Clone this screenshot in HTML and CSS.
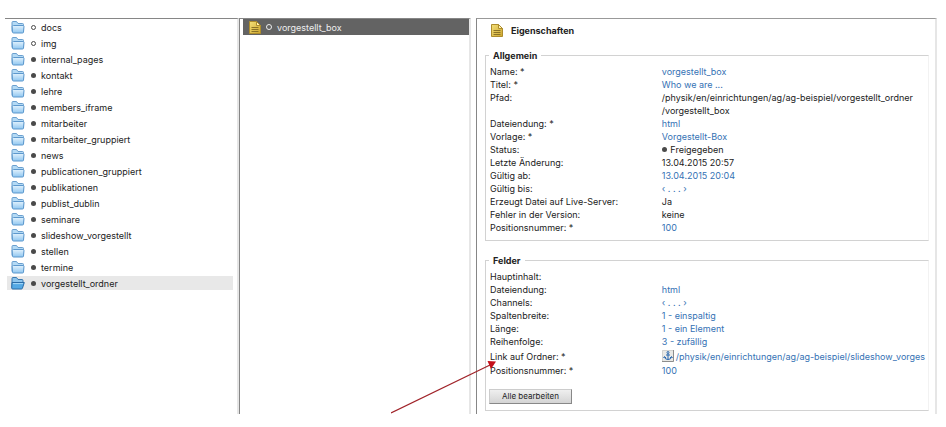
FILE: index.html
```html
<!DOCTYPE html>
<html lang="de">
<head>
    <meta charset="UTF-8">
    <meta name="viewport" content="width=device-width, initial-scale=1.0">
    <title>vorgestellt_box - Eigenschaften</title>
    <link rel="stylesheet" href="styles.css">
</head>
<body>
    <!-- shared icons -->
    <svg class="defs" width="0" height="0">
        <defs>
            <linearGradient id="blue" x1="0" y1="0" x2="0" y2="1">
                <stop offset="0" stop-color="#e2f2fd"/>
                <stop offset="1" stop-color="#8fc6f0"/>
            </linearGradient>
            <linearGradient id="gold" x1="0" y1="0" x2="1" y2="1">
                <stop offset="0" stop-color="#f3df79"/>
                <stop offset="1" stop-color="#cda62e"/>
            </linearGradient>
        </defs>
        <symbol id="folder" viewBox="0 0 14 13">
            <path d="M1 10.500V1.500q0-1 1-1h3.500l1.500 2h4.500q1 0 1 1v7.500" fill="#b4daf5" stroke="#6a9fce"/>
            <path d="M2.500 4.500h9.500q1 0 1 1l-.5 5.500q0 1-1 1H2.500q-1 0-1-1L1.200 5.500q0-1 1.300-1z" fill="url(#blue)" stroke="#5d98cd"/>
        </symbol>
        <symbol id="folder-open" viewBox="0 0 14 13">
            <path d="M1 10.500V1.500q0-1 1-1h3.500l1.500 2h4q1 0 1 1v3" fill="#8cc4ec" stroke="#3a79b0"/>
            <path d="M1 5.500h12.300l-1.800 5.500q-.3 1-1 1H1.700q-1 0-1-1z" fill="#55a9e4" stroke="#2c6ca6"/>
            <path d="M2 6.600h10" stroke="#a8d9f8"/>
        </symbol>
        <symbol id="page" viewBox="0 0 12 13">
            <path d="M.5.500h7l4 4v8h-11z" fill="url(#gold)" stroke="#ad8c2c"/>
            <path d="M7.500.500v4h4z" fill="#fff3b5" stroke="#ad8c2c"/>
            <path d="M2.500 6.500h7M2.500 8.500h7M2.500 10.500h7" stroke="#8a7226"/>
        </symbol>
    </svg>

    <div class="panels">
        <nav class="panel tree">
            <ul>
                <li><svg class="folder"><use href="#folder"/></svg><i class="dot open"></i>docs</li>
                <li><svg class="folder"><use href="#folder"/></svg><i class="dot open"></i>img</li>
                <li><svg class="folder"><use href="#folder"/></svg><i class="dot"></i>internal_pages</li>
                <li><svg class="folder"><use href="#folder"/></svg><i class="dot"></i>kontakt</li>
                <li><svg class="folder"><use href="#folder"/></svg><i class="dot"></i>lehre</li>
                <li><svg class="folder"><use href="#folder"/></svg><i class="dot"></i>members_iframe</li>
                <li><svg class="folder"><use href="#folder"/></svg><i class="dot"></i>mitarbeiter</li>
                <li><svg class="folder"><use href="#folder"/></svg><i class="dot"></i>mitarbeiter_gruppiert</li>
                <li><svg class="folder"><use href="#folder"/></svg><i class="dot"></i>news</li>
                <li><svg class="folder"><use href="#folder"/></svg><i class="dot"></i>publicationen_gruppiert</li>
                <li><svg class="folder"><use href="#folder"/></svg><i class="dot"></i>publikationen</li>
                <li><svg class="folder"><use href="#folder"/></svg><i class="dot"></i>publist_dublin</li>
                <li><svg class="folder"><use href="#folder"/></svg><i class="dot"></i>seminare</li>
                <li><svg class="folder"><use href="#folder"/></svg><i class="dot"></i>slideshow_vorgestellt</li>
                <li><svg class="folder"><use href="#folder"/></svg><i class="dot"></i>stellen</li>
                <li><svg class="folder"><use href="#folder"/></svg><i class="dot"></i>termine</li>
                <li class="active"><svg class="folder"><use href="#folder-open"/></svg><i class="dot"></i>vorgestellt_ordner</li>
            </ul>
        </nav>

        <section class="panel files">
            <div class="file"><svg class="page"><use href="#page"/></svg><i class="dot open"></i>vorgestellt_box</div>
        </section>

        <main class="panel details">
            <h1><svg class="page"><use href="#page"/></svg>Eigenschaften</h1>

            <fieldset>
                <legend>Allgemein</legend>
                <table>
                    <tr><th scope="row">Name: *</th><td><a href="#">vorgestellt_box</a></td></tr>
                    <tr><th scope="row">Titel: *</th><td><a href="#">Who we are ...</a></td></tr>
                    <tr><th scope="row">Pfad:</th><td>/physik/en/einrichtungen/ag/ag-beispiel/vorgestellt_ordner<br>/vorgestellt_box</td></tr>
                    <tr><th scope="row">Dateiendung: *</th><td><a href="#">html</a></td></tr>
                    <tr><th scope="row">Vorlage: *</th><td><a href="#">Vorgestellt-Box</a></td></tr>
                    <tr><th scope="row">Status:</th><td><i class="dot"></i> Freigegeben</td></tr>
                    <tr><th scope="row">Letzte Änderung:</th><td>13.04.2015 20:57</td></tr>
                    <tr><th scope="row">Gültig ab:</th><td><a href="#">13.04.2015 20:04</a></td></tr>
                    <tr><th scope="row">Gültig bis:</th><td><a href="#">‹ . . . ›</a></td></tr>
                    <tr><th scope="row">Erzeugt Datei auf Live-Server:</th><td>Ja</td></tr>
                    <tr><th scope="row">Fehler in der Version:</th><td>keine</td></tr>
                    <tr><th scope="row">Positionsnummer: *</th><td><a href="#">100</a></td></tr>
                </table>
            </fieldset>

            <fieldset>
                <legend>Felder</legend>
                <table>
                    <tr><th scope="row">Hauptinhalt:</th><td></td></tr>
                    <tr><th scope="row">Dateiendung:</th><td><a href="#">html</a></td></tr>
                    <tr><th scope="row">Channels:</th><td><a href="#">‹ . . . ›</a></td></tr>
                    <tr><th scope="row">Spaltenbreite:</th><td><a href="#">1 - einspaltig</a></td></tr>
                    <tr><th scope="row">Länge:</th><td><a href="#">1 - ein Element</a></td></tr>
                    <tr><th scope="row">Reihenfolge:</th><td><a href="#">3 - zufällig</a></td></tr>
                    <tr class="target">
                        <th scope="row">Link auf Ordner: *</th>
                        <td>
                            <a href="#" class="link">
                                <svg class="anchor" viewBox="0 0 12 12">
                                    <path d="M0 0h12v12H0z" fill="#e9e9e6"/>
                                    <path d="M.5 11V.5H11" fill="none" stroke="#d2d2d0"/>
                                    <path d="M0 11.500h11.500V0" fill="none" stroke="#8d8d8d"/>
                                    <circle cx="6" cy="2.500" r="1" fill="none" stroke="#2b68b0"/>
                                    <path d="M6 3.500v6M4 5h4M2.500 7q.5 2.500 3.500 2.500T9.500 7M1.500 8l1-1.500L4 8M8 8l1.500-1.500 1 1.500" fill="none" stroke="#2b68b0"/>
                                </svg>
                                <span>/physik/en/einrichtungen/ag/ag-beispiel/slideshow_vorges</span>
                            </a>
                        </td>
                    </tr>
                    <tr><th scope="row">Positionsnummer: *</th><td><a href="#">100</a></td></tr>
                </table>
                <button type="button">Alle bearbeiten</button>
            </fieldset>
        </main>

        <!-- arrow pointing at "Link auf Ordner" -->
        <svg class="arrow" viewBox="0 0 106 54">
            <path d="M0 53L99 5" fill="none" stroke="#a02329" stroke-width="1.200"/>
            <path d="M105 1.500L96.500 1l3.500 8z" fill="#c4101a"/>
        </svg>
    </div>
</body>
</html>
```

FILE: styles.css
```css
body {
    margin: 18px 9px 14px 5px;
    font-family: Inter, "Liberation Sans", Arial, sans-serif;
    font-size: 9px;
    line-height: 13px;
    color: #222;
    background-color: #fff;
}
.defs {
    position: absolute;
}
svg {
    display: block;
    flex: none;
}
a {
    color: #3572b4;
    text-decoration: none;
}
a:hover {
    text-decoration: underline;
}
.panels {
    position: relative;
    display: grid;
    grid-template-columns: 234fr 237fr 461fr;
}
.panel {
    min-width: 0;
    border-top: 1px solid #868686;
    border-right: 2px solid #e6e6e6;
}
.files {
    border-left: 1px solid #868686;
    margin-right: 5px;
    padding-left: 3px;
}
.details {
    border-left: 1px solid #868686;
    border-top-color: #999;
    padding: 4px 6px 3px 8px;
}

/* folder list */
.tree ul {
    list-style: none;
    margin: 0;
    padding: 1px 4px 0 2px;
}
.tree li {
    display: flex;
    align-items: center;
    height: 14px;
    margin-bottom: 2px;
    padding-left: 4px;
}
.tree .active {
    background-color: #e8e8e8;
}
.folder {
    width: 14px;
    height: 13px;
    margin-right: 6px;
}
.page {
    width: 12px;
    height: 13px;
}
.dot {
    display: inline-block;
    box-sizing: border-box;
    width: 5px;
    height: 5px;
    margin: 0 1px 1px 0;
    border-radius: 50%;
    background-color: #4a4a4a;
}
.dot.open {
    background-color: transparent;
    border: 1px solid #4a4a4a;
}
.tree .dot {
    margin: 0 5px 0 0;
}

/* selected file */
.file {
    display: flex;
    align-items: center;
    height: 16px;
    padding-left: 6px;
    color: #eee;
    background-color: #636363;
}
.file .dot.open {
    width: 6px;
    height: 6px;
    margin: 0 5px;
    border-color: #eee;
}

/* properties */
h1 {
    display: flex;
    align-items: center;
    gap: 8px;
    margin: 0 0 11px;
    padding-left: 6px;
    font-size: 9px;
    line-height: 15px;
}
fieldset {
    min-width: 0;
    margin: 0 0 13px;
    padding: 3px 0 6px 4px;
    border: 1px solid #d2d2d2;
    border-right-color: #f2f2f2;
}
fieldset:last-child {
    margin-bottom: 0;
}
legend {
    margin-left: -1px;
    padding: 0 4px;
    font-weight: bold;
}
table {
    width: 100%;
    table-layout: fixed;
    border-collapse: collapse;
}
th,
td {
    padding: 0;
    vertical-align: top;
    text-align: left;
    font-weight: normal;
    white-space: nowrap;
}
td {
    padding-left: 1px;
}
th {
    width: 39%;
}
.target th {
    vertical-align: middle;
}
.link {
    display: flex;
    align-items: center;
    gap: 2px;
    height: 16px;
}
.anchor {
    width: 12px;
    height: 12px;
}
button {
    display: block;
    width: 83px;
    height: 15px;
    margin: 12px 0 0 -1px;
    padding: 0;
    border: 1px solid #ccc;
    border-right-color: #888;
    border-bottom-color: #888;
    background: linear-gradient(#efefef, #d4d4d4);
    font: inherit;
    font-size: 8px;
    line-height: 13px;
    color: #222;
    cursor: pointer;
}

.arrow {
    position: absolute;
    left: 386px;
    bottom: 0;
    width: 106px;
    height: 54px;
}
```
